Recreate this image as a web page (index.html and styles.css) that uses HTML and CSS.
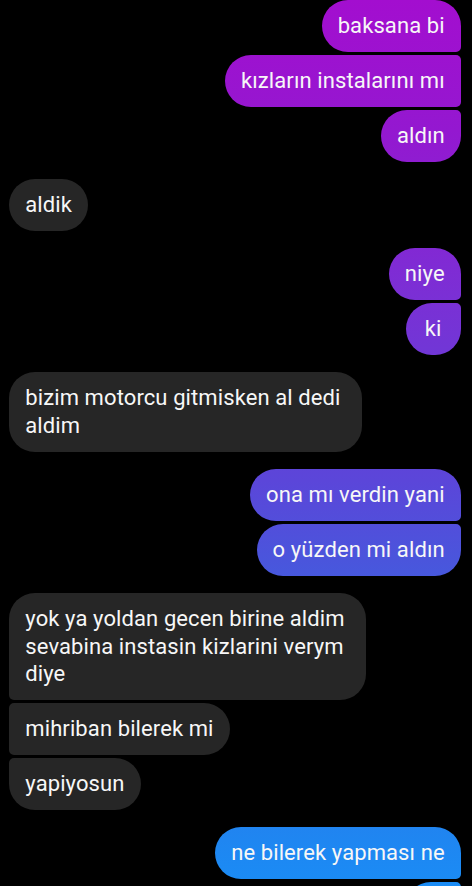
FILE: index.html
```html
<!DOCTYPE html>
<html lang="tr">
<head>
<meta charset="utf-8">
<title>Sohbet</title>
<link rel="stylesheet" href="styles.css">
</head>
<body>
<main class="chat">
  <div class="group sent">
    <div class="msg first">baksana bi</div>
    <div class="msg mid">kızların instalarını mı</div>
    <div class="msg last">aldın</div>
  </div>
  <div class="group recv">
    <div class="msg solo">aldik</div>
  </div>
  <div class="group sent">
    <div class="msg first">niye</div>
    <div class="msg last">ki</div>
  </div>
  <div class="group recv">
    <div class="msg solo multi">bizim motorcu gitmisken al dedi<br>aldim</div>
  </div>
  <div class="group sent">
    <div class="msg first">ona mı verdin yani</div>
    <div class="msg last">o yüzden mi aldın</div>
  </div>
  <div class="group recv">
    <div class="msg first multi">yok ya yoldan gecen birine aldim<br>sevabina instasin kizlarini verym<br>diye</div>
    <div class="msg mid">mihriban bilerek mi</div>
    <div class="msg last">yapiyosun</div>
  </div>
  <div class="group sent">
    <div class="msg first">ne bilerek yapması ne</div>
    <div class="msg last empty"></div>
  </div>
</main>
</body>
</html>
```
FILE: styles.css
```css
html, body {
  margin: 0;
  padding: 0;
  height: 100%;
  overflow: hidden;
  background: #000;
}

.chat {
  display: flex;
  flex-direction: column;
  gap: 16.7px;
  padding: 0 11.3px 0 9.3px;
  font-family: Roboto, "Noto Sans", sans-serif;
}

.group {
  display: flex;
  flex-direction: column;
  gap: 2.6px;
}

.sent { align-items: flex-end; }
.recv { align-items: flex-start; }

.msg {
  box-sizing: border-box;
  min-width: 55px;
  text-align: center;
  font-size: 22px;
  line-height: 27.6px;
  letter-spacing: 0.1px;
  padding: 12.4px 16px;
  border-radius: 26px;
  color: #f7f7f7;
  white-space: nowrap;
}

.multi {
  text-align: left;
  padding-right: 21px;
}

.empty {
  height: 52.4px;
  width: 56px;
}

.recv .msg { background: #262626; }

.sent .msg {
  background: linear-gradient(to bottom,
    #a30ecf 0px,
    #9418d0 130px,
    #7a30d5 300px,
    #5b46d9 480px,
    #4a55dc 560px,
    #2f70e8 700px,
    #1f86f1 840px,
    #1a8cf5 886px) fixed;
}

.sent .first { border-bottom-right-radius: 5px; }
.sent .mid { border-top-right-radius: 5px; border-bottom-right-radius: 5px; }
.sent .last { border-top-right-radius: 5px; }

.recv .first { border-bottom-left-radius: 5px; }
.recv .mid { border-top-left-radius: 5px; border-bottom-left-radius: 5px; }
.recv .last { border-top-left-radius: 5px; }
```
